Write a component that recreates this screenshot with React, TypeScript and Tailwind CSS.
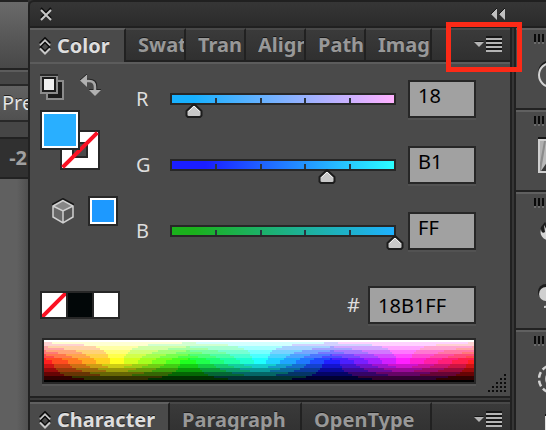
import React, { useState } from "react";

const levels = (hue: number, row: number): string => {
  const channel = (offset: number) => {
    const k = (offset + hue / 60) % 6;
    const pure = 1 - Math.max(0, Math.min(1, Math.min(k, 4 - k)));
    const value = row <= 10 ? 1 - (row / 10) * (1 - pure) : pure * Math.min(1, (21 - row) / 10);
    return Math.floor(value * 5 + 0.45) * 51;
  };
  const rgb = [channel(5), channel(3), channel(1)];
  const max = Math.max(...rgb);
  const out = rgb.map((c) => Math.round(max ? c + (max - c) * 0.12 * (max / 255) : 0));
  return `rgb(${out.join(",")})`;
};

const spectrumCells = (() => {
  const cells: { x: number; y: number; w: number; fill: string }[] = [];
  for (let y = 0; y < 21; y++) {
    let start = 0;
    let fill = levels(0, y);
    for (let x = 1; x <= 215; x++) {
      const next = x < 215 ? levels((x / 215) * 360, y) : "";
      if (next !== fill) {
        cells.push({ x: start, y, w: x - start, fill });
        start = x;
        fill = next;
      }
    }
  }
  return cells;
})();

const channels = [
  { name: "R", value: 24, hex: "18", track: "bg-linear-to-r/srgb from-[#18b1ff] from-10% to-[#ffb1ff]" },
  { name: "G", value: 177, hex: "B1", track: "bg-linear-to-r/srgb from-[#1a1eff] from-15% to-[#2bffff]" },
  { name: "B", value: 255, hex: "FF", track: "bg-linear-to-r/srgb from-[#1bb11c] from-10% to-[#1fb1ff]" },
];

function Updown() {
  return (
    <svg width="12" height="20" viewBox="0 0 12 20" fill="none" className="shrink-0" aria-hidden="true">
      <path d="M1 7.500 6 2.500l5 5" stroke="#0c0c0c" strokeWidth="2.500" />
      <path d="M1 9.500 6 4.500l5 5" stroke="#c8c8c8" strokeWidth="2" />
      <path d="M1.500 11 6 6.500l4.500 4.500" stroke="#0c0c0c" strokeWidth="1.500" />
      <path d="M1 10.500 6 15.500l5-5" stroke="#0c0c0c" strokeWidth="2" />
      <path d="M1 12.500 6 17.500l5-5" stroke="#c8c8c8" strokeWidth="2" />
    </svg>
  );
}

function Tab({ label, active, width }: { label: string; active?: boolean; width: string }) {
  return (
    <button
      type="button"
      role="tab"
      aria-selected={!!active}
      className={`${width} flex shrink-0 items-center overflow-hidden border-r-2 border-[#212121] text-xl font-bold whitespace-nowrap [text-shadow:0_-1px_#1a1a1a] ${
        active
          ? "gap-[6px] border-t-2 border-t-[#606060] bg-[#4a4a4a] pl-[9px] text-[#dedede]"
          : "border-t-2 border-t-[#484848] bg-linear-to-b from-[#3a3a3a] to-[#303030] pl-3 text-[#989898]"
      }`}
    >
      {active && <Updown />}
      <span className="min-w-0 overflow-hidden">{label}</span>
    </button>
  );
}

function MenuButton({ marked }: { marked?: boolean }) {
  return (
    <div className="relative flex flex-1 items-center justify-end border-t-2 border-[#484848] bg-linear-to-b from-[#3a3a3a] to-[#303030] pr-2">
      <button type="button" aria-label="Panel menu">
        <svg width="28" height="18" viewBox="0 0 28 18" aria-hidden="true">
          <path d="M0 5h10l-5 5z" fill="#161616" />
          <path d="M0 6h10l-5 5z" fill="#b4b4b4" />
          <path d="M12 1h16M12 5h16M12 9h16M12 13h16" stroke="#161616" strokeWidth="2" />
          <path d="M12 3h16M12 7h16M12 11h16M12 15h16" stroke="#b4b4b4" strokeWidth="2" />
        </svg>
      </button>
      {marked && (
        <div className="pointer-events-none absolute -top-2 -right-3 z-20 h-[50px] w-[76px] border-[5px] border-[#fc2a17]" />
      )}
    </div>
  );
}

function ChannelRow({ channel }: { channel: (typeof channels)[number] }) {
  const [value, setValue] = useState(channel.value);
  const id = `channel-${channel.name}`;
  return (
    <div className="flex items-center">
      <label htmlFor={id} className="w-[34px] text-xl text-[#dedede]">
        {channel.name}
      </label>
      <div className={`relative h-3 flex-1 border-2 border-[#272727] ${channel.track}`}>
        <div className="flex h-full items-end justify-evenly">
          {[1, 2, 3, 4].map((n) => (
            <span key={n} className="h-[5px] w-[2px] bg-[#2b3540]" />
          ))}
        </div>
        <svg
          width="18"
          height="16"
          viewBox="0 0 18 16"
          className="absolute top-2 -ml-2"
          style={{ left: `${(value / 255) * 100}%` }}
          aria-hidden="true"
        >
          <path d="M9 1 1.500 8v4.500L3 14h12l1.500-1.500V8z" fill="#c8c8c8" stroke="#1c1c1c" strokeWidth="2" strokeLinejoin="round" />
          <path d="M3.500 8.500 9 3l5.500 5.500" fill="none" stroke="#f0f0f0" />
        </svg>
        <input
          type="range"
          min="0"
          max="255"
          value={value}
          onChange={(e) => setValue(Number(e.target.value))}
          aria-label={`${channel.name} slider`}
          className="absolute inset-0 w-full opacity-0"
        />
      </div>
      <input
        id={id}
        defaultValue={channel.hex}
        className="ml-3 h-[38px] w-[68px] border-2 border-[#272727] bg-[#a1a1a1] pb-2 pl-2 text-xl text-black shadow-[0_2px_#525252]"
      />
    </div>
  );
}

function NoneSwatch() {
  return (
    <svg viewBox="0 0 24 24" className="h-6 w-6 bg-white" aria-label="None">
      <path d="M1 23 23 1" stroke="#fb1022" strokeWidth="4" strokeLinecap="square" />
    </svg>
  );
}

function Tools() {
  return (
    <div className="w-[96px] shrink-0">
      <div className="flex gap-4">
        <button type="button" aria-label="Default fill and stroke">
          <svg width="24" height="26" viewBox="0 0 24 26" aria-hidden="true">
            <path d="M6 6h18v20H6z" fill="#8b8b8b" />
            <path d="M8 8h14v16H8z" fill="#1b1b1b" />
            <path d="M12 12h5v6h-5z" fill="#8b8b8b" />
            <path d="M0 0h18v20H0z" fill="#8b8b8b" />
            <path d="M0 0h18v2H0z" fill="#2a2a2a" />
            <path d="M2 3h14v15H2z" fill="#1b1b1b" />
            <path d="M4 5h10v11H4z" fill="#f0f0f0" />
          </svg>
        </button>
        <button type="button" aria-label="Swap fill and stroke">
          <svg width="22" height="26" viewBox="0 0 22 26" aria-hidden="true">
            <path d="M6 6h3c5 0 7 2 7 6v4" fill="none" stroke="#262626" strokeWidth="2.500" />
            <path d="M6 7h3c4 0 6 2 6 6v4" fill="none" stroke="#a8a8a8" strokeWidth="2.500" />
            <path d="M7 0v13L0 6.500z" fill="#b0b0b0" />
            <path d="M7 0 0 6" stroke="#262626" />
            <path d="M9 16h12l-6 6z" fill="#b0b0b0" />
            <path d="M9 15.500h4m4 0h4" stroke="#262626" />
          </svg>
        </button>
      </div>
      <div className="relative mt-[10px] h-[60px] w-[60px]">
        <svg viewBox="0 0 40 40" className="absolute right-0 bottom-0 h-10 w-10" aria-label="Stroke: none">
          <path d="M0 0h40v40H0z" fill="#272727" />
          <path d="M2 2h36v36H2z" fill="#fff" />
          <path d="M12 12h16v16H12z" fill="#272727" />
          <path d="M14 14h12v12H14z" fill="#4a4a4a" />
          <path d="M4 36 36 4" stroke="#fb1022" strokeWidth="4" strokeLinecap="square" />
        </svg>
        <button type="button" aria-label="Fill colour" className="absolute top-0 left-0 h-10 w-10 border-2 border-[#272727] bg-white p-[2px]">
          <span className="block h-full w-full bg-[#29afff]" />
        </button>
      </div>
      <div className="mt-[26px] flex items-center pl-3">
        <button type="button" aria-label="Out of web gamut" className="mr-[14px]">
          <svg width="22" height="26" viewBox="0 0 22 26" aria-hidden="true">
            <path d="m0 7 11-6 11 6" fill="none" stroke="#171717" strokeWidth="2" />
            <path d="m1 8 10 5v12L1 19z" fill="#686868" />
            <path d="m21 8-10 5v12l10-6z" fill="#555" />
            <path d="M11 2.500 1 8l10 5 10-5z" fill="#868686" />
            <path d="M11 2.500 1 8v11l10 6 10-6V8zM1 8l10 5 10-5M11 13v12" fill="none" stroke="#d0d0d0" strokeWidth="1.500" />
          </svg>
        </button>
        <button type="button" aria-label="Web colour" className="h-[30px] w-[30px] border-2 border-[#272727] bg-white p-[2px]">
          <span className="block h-full w-full bg-[#1d99ff]" />
        </button>
      </div>
    </div>
  );
}

function ColorPanel() {
  return (
    <section className="relative border-t-2 border-[#5c5c5c] bg-[#4a4a4a] pt-[10px] pr-[34px] pb-3 pl-[10px]">
      <div className="flex">
        <Tools />
        <div className="flex flex-1 flex-col gap-7 pt-[6px]">
          {channels.map((c) => (
            <ChannelRow key={c.name} channel={c} />
          ))}
        </div>
      </div>
      <div className="mt-9 flex items-center justify-between">
        <div className="flex gap-[2px] border-2 border-[#272727] bg-[#272727]">
          <NoneSwatch />
          <button type="button" aria-label="Black" className="h-6 w-6 bg-[#020708]" />
          <button type="button" aria-label="White" className="h-6 w-6 bg-white" />
        </div>
        <div className="flex items-center gap-2">
          <label htmlFor="hex" className="text-xl text-[#dedede]">
            #
          </label>
          <input
            id="hex"
            defaultValue="18B1FF"
            className="h-[38px] w-[108px] border-2 border-[#272727] bg-[#a1a1a1] pl-2 text-xl text-black shadow-[0_2px_#525252]"
          />
        </div>
      </div>
      <div className="mt-[14px] ml-[2px] border-2 border-[#272727] shadow-[0_2px_#555]">
        <svg viewBox="0 0 215 21" preserveAspectRatio="none" shapeRendering="crispEdges" className="block h-[42px] w-full" aria-label="Colour spectrum">
          {spectrumCells.map((c) => (
            <rect key={`${c.x}-${c.y}`} x={c.x} y={c.y} width={c.w} height="1" fill={c.fill} />
          ))}
        </svg>
      </div>
      <svg width="18" height="18" viewBox="0 0 18 18" className="absolute right-1 bottom-1" aria-hidden="true">
        {[0, 1, 2, 3, 4].map((row) =>
          Array.from({ length: row + 1 }, (_, i) => (
            <rect key={`${row}-${i}`} x={16 - i * 4} y={row * 4} width="2" height="2" fill="#0c0c0c" />
          )),
        )}
      </svg>
    </section>
  );
}

function DockGroup({ height, children }: { height: string; children: React.ReactNode }) {
  return (
    <div className={`${height} shrink-0 overflow-hidden border-t-2 border-b-2 border-t-[#606060] border-b-[#222] bg-[#4a4a4a] pt-1 pl-[18px]`}>
      <svg width="12" height="10" viewBox="0 0 12 10" className="block" aria-hidden="true">
        <path d="M1 0v8M5 0v8M9 0v8" stroke="#0a0a0a" strokeWidth="2" />
        <path d="M1 8v2M5 8v2M9 8v2" stroke="#6b6b6b" strokeWidth="2" />
      </svg>
      {children}
    </div>
  );
}

function Dock() {
  return (
    <aside className="flex w-[30px] shrink-0 flex-col overflow-hidden">
      <DockGroup height="h-[82px]">
        <svg width="12" height="30" viewBox="0 0 12 30" className="mt-4 ml-1 block" aria-hidden="true">
          <circle cx="13" cy="13" r="12" fill="none" stroke="#1c1c1c" strokeWidth="2" />
          <circle cx="13" cy="15" r="12" fill="#505050" stroke="#d4d4d4" strokeWidth="2" />
        </svg>
      </DockGroup>
      <DockGroup height="h-[82px]">
        <svg width="12" height="38" viewBox="0 0 12 38" className="mt-[11px] ml-1 block" aria-hidden="true">
          <path d="M0 0h12v3H0z" fill="#161616" />
          <path d="M0 2h12v34H0z" fill="#cfcfcf" />
          <path d="M2 4h10v30H2z" fill="#8c8c8c" />
          <path d="M2 4h4L2 26z" fill="#b0b0b0" />
          <path d="M3 34 8 4h4v30z" fill="#b9b9b9" />
          <path d="m3 34 7-10v10z" fill="#3a3a3a" />
        </svg>
      </DockGroup>
      <DockGroup height="h-[138px]">
        <svg width="12" height="110" viewBox="0 0 12 110" className="mt-3 ml-1 block" aria-hidden="true">
          <path d="M3 7 7 2l5 8v10C5 17 1 13 3 7z" fill="#1c1c1c" />
          <path d="M3 9c0 3 2 5 4 3l-1-7c2 3 3 7 6 11v5C5 20 1 15 3 9z" fill="#d4d4d4" />
          <circle cx="8" cy="72" r="8" fill="#1c1c1c" />
          <circle cx="8" cy="74" r="7" fill="#cfcfcf" />
          <path d="M6 87c2 0 4-1 6-3" stroke="#cfcfcf" strokeWidth="2" fill="none" />
        </svg>
      </DockGroup>
      <DockGroup height="h-[140px]">
        <svg width="12" height="90" viewBox="0 0 12 90" className="mt-4 ml-1 block" aria-hidden="true">
          <circle cx="15" cy="17" r="14" fill="none" stroke="#d4d4d4" strokeWidth="2.500" strokeDasharray="6 3" />
          <circle cx="15" cy="17" r="8" fill="#bcbcbc" />
          <path d="M7 54h5v30H7z" fill="#e0e0e0" />
          <path d="M7 52h5v2H7z" fill="#161616" />
        </svg>
      </DockGroup>
    </aside>
  );
}

function Backdrop() {
  return (
    <div className="flex w-7 shrink-0 flex-col overflow-hidden bg-[#5c5c5c] text-xl whitespace-nowrap">
      <div className="h-[70px] shrink-0 border-t-2 border-b-2 border-[#222] bg-linear-to-b from-[#6a6a6a] to-[#484848]" />
      <div className="h-[67px] shrink-0 border-t-2 border-[#5c5c5c] bg-[#464646] pt-3">
        <button type="button" className="h-[38px] w-16 border-y-2 border-[#282828] bg-linear-to-b from-[#626262] to-[#505050] pl-[2px] text-left text-[#e4e4e4] [text-shadow:0_-1px_#222]">
          Pre
        </button>
      </div>
      <div className="flex h-[42px] shrink-0 items-center justify-end border-y-2 border-[#222] bg-[#303030] pr-[1px] font-bold text-[#a0a0a0]">
        -2
      </div>
      <div className="flex-1 bg-linear-to-r from-[#606060] from-60% to-[#505050]" />
    </div>
  );
}

export default function App() {
  return (
    <div className="flex h-screen w-full overflow-hidden bg-[#333] font-['Noto_Sans',sans-serif] leading-6">
      <Backdrop />
      <main className="flex min-w-0 flex-1 flex-col">
        <header className="flex h-7 shrink-0 items-center justify-between rounded-tl-md border-y-2 border-l-2 border-[#202020] bg-linear-to-b from-[#363636] to-[#2b2b2b] pr-[41px] pl-[10px]">
          <button type="button" aria-label="Close">
            <svg width="12" height="14" viewBox="0 0 12 14" className="block" aria-hidden="true">
              <path d="m1 1 10 10M11 1 1 11" stroke="#0e0e0e" strokeWidth="2" />
              <path d="m1 3 10 10M11 3 1 13" stroke="#c8c8c8" strokeWidth="2" />
            </svg>
          </button>
          <button type="button" aria-label="Collapse panels">
            <svg width="14" height="12" viewBox="0 0 14 12" className="block" aria-hidden="true">
              <path d="M6 0v12L0 6zM14 0v12L8 6z" fill="#c0c0c0" />
              <path d="M6 0 0 6M14 0 8 6" stroke="#161616" />
            </svg>
          </button>
        </header>
        <div className="flex min-h-0 flex-1">
          <div className="min-w-0 flex-1 border-x-2 border-[#212121]">
            <div role="tablist" className="flex h-[34px] bg-[#212121]">
              <Tab label="Color" active width="w-24" />
              <div className="flex min-w-0 flex-1 border-b-2 border-[#212121]">
                <Tab label="Swat" width="w-[60px]" />
                <Tab label="Tran" width="w-[60px]" />
                <Tab label="Align" width="w-[60px]" />
                <Tab label="Path" width="w-[60px]" />
                <Tab label="Imag" width="w-[66px]" />
                <MenuButton marked />
              </div>
            </div>
            <ColorPanel />
            <div className="h-[6px] border-y-2 border-[#212121] bg-[#3a3a3a]" />
            <div role="tablist" className="flex h-[34px] bg-[#212121]">
              <Tab label="Character" active width="w-[140px]" />
              <Tab label="Paragraph" width="w-[132px]" />
              <Tab label="OpenType" width="w-[130px]" />
              <MenuButton />
            </div>
          </div>
          <div className="w-[4px] shrink-0 border-r-2 border-[#212121] bg-[#363636]" />
          <Dock />
        </div>
      </main>
    </div>
  );
}
